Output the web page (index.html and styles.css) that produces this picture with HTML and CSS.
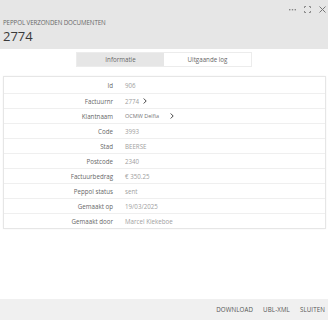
FILE: index.html
```html
<html lang="nl">
<head>
    <meta charset="UTF-8">
    <title>Peppol verzonden documenten</title>
    <link rel="stylesheet" href="styles.css">
</head>
<body>
<div class="dialog">
    <div class="header">
        <div class="header-tools">
            <span class="tool">
                <svg width="7" height="3" viewBox="0 0 7 3"><rect x="0" y="1" width="1.4" height="1.4" fill="#888"/><rect x="2.8" y="1" width="1.4" height="1.4" fill="#888"/><rect x="5.6" y="1" width="1.4" height="1.4" fill="#888"/></svg>
            </span>
            <span class="tool">
                <svg width="7" height="7" viewBox="0 0 7 7" fill="none" stroke="#888" stroke-width="1"><path d="M0.5 2V0.5H2M5 0.5H6.5V2M6.5 5V6.5H5M2 6.5H0.5V5"/></svg>
            </span>
            <span class="tool">
                <svg width="7" height="7" viewBox="0 0 7 7" stroke="#777" stroke-width="1"><path d="M0.5 0.5L6.5 6.5M6.5 0.5L0.5 6.5"/></svg>
            </span>
        </div>
        <div class="header-sub">PEPPOL VERZONDEN DOCUMENTEN</div>
        <div class="header-title">2774</div>
    </div>

    <div class="tabs">
        <div class="tab active">Informatie</div>
        <div class="tab">Uitgaande log</div>
    </div>

    <div class="card">
        <div class="row"><span class="label">Id</span><span class="value">906</span></div>
        <div class="row"><span class="label">Factuurnr</span><span class="value">2774</span><svg class="chev" width="4" height="6" viewBox="0 0 4 6" fill="none" stroke="#444" stroke-width="1"><path d="M0.7 0.5L3.2 3L0.7 5.5"/></svg></div>
        <div class="row"><span class="label">Klantnaam</span><span class="value link">OCMW Delfia</span><svg class="chev wide" width="4" height="6" viewBox="0 0 4 6" fill="none" stroke="#444" stroke-width="1"><path d="M0.7 0.5L3.2 3L0.7 5.5"/></svg></div>
        <div class="row"><span class="label">Code</span><span class="value">3993</span></div>
        <div class="row"><span class="label">Stad</span><span class="value">BEERSE</span></div>
        <div class="row"><span class="label">Postcode</span><span class="value">2340</span></div>
        <div class="row"><span class="label">Factuurbedrag</span><span class="value">&euro; 350.25</span></div>
        <div class="row"><span class="label">Peppol status</span><span class="value">sent</span></div>
        <div class="row"><span class="label">Gemaakt op</span><span class="value">19/03/2025</span></div>
        <div class="row"><span class="label">Gemaakt door</span><span class="value">Marcel Kiekeboe</span></div>
    </div>

    <div class="footer">
        <span class="btn">DOWNLOAD</span>
        <span class="btn">UBL-XML</span>
        <span class="btn">SLUITEN</span>
    </div>
</div>
</body>
</html>
```
FILE: styles.css
```css
body {
    margin: 0;
    padding: 0;
    font-family: "Open Sans", "Noto Sans", sans-serif;
    background: #fff;
}

.dialog {
    width: 328px;
    height: 320px;
    display: flex;
    flex-direction: column;
}

.header {
    background: #e6e6e6;
    height: 49px;
    padding: 0 3px;
    box-sizing: border-box;
    position: relative;
}

.header-tools {
    position: absolute;
    top: 5px;
    right: 2px;
    display: flex;
    gap: 8px;
    align-items: center;
}

.tool {
    display: flex;
    align-items: center;
    height: 8px;
}

.header-sub {
    padding-top: 18px;
    font-size: 6.2px;
    color: #666;
    letter-spacing: -0.1px;
}

.header-title {
    font-size: 13px;
    color: #3a3a3a;
    line-height: 14px;
    margin-top: 2px;
}

.tabs {
    display: flex;
    width: 174px;
    margin: 3px auto 0;
    border: 1px solid #ececec;
    height: 13px;
}

.tab {
    flex: 1;
    font-size: 6.2px;
    color: #666;
    text-align: center;
    line-height: 13px;
    background: #fff;
}

.tab.active {
    background: #e6e6e6;
}

.card {
    margin: 9px 2px 0 3px;
    border: 1px solid #e6e6e6;
    padding-top: 1px;
    box-shadow: 0 0 2px rgba(0, 0, 0, 0.05);
}

.row {
    display: flex;
    height: 15px;
    align-items: center;
    border-top: 1px solid #efefef;
    box-sizing: border-box;
}

.row:first-child {
    border-top: none;
}

.label {
    width: 109px;
    text-align: right;
    font-size: 6.2px;
    color: #666;
}

.value {
    margin-left: 12px;
    font-size: 6.2px;
    color: #a0a0a0;
}

.value.link {
    color: #777;
    font-size: 5.5px;
}

.chev {
    margin-left: 4px;
}

.chev.wide {
    margin-left: 11px;
}

.footer {
    margin-top: auto;
    height: 21px;
    background: #f0f0f0;
    display: flex;
    justify-content: flex-end;
    align-items: center;
    gap: 10px;
    padding-right: 3px;
}

.btn {
    font-size: 6.2px;
    color: #555;
    letter-spacing: 0.1px;
}
```
